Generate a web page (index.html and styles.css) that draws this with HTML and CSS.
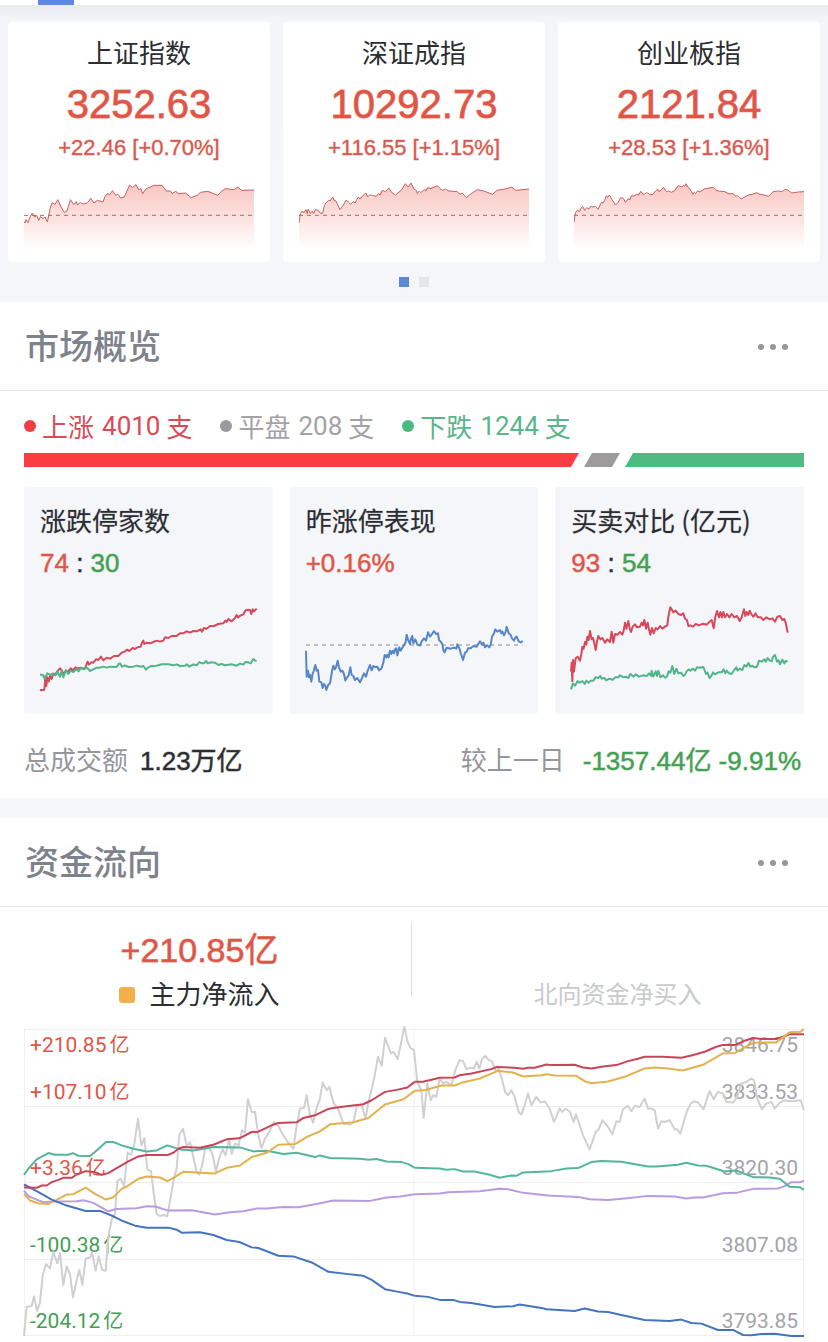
FILE: index.html
```html
<!DOCTYPE html>
<html lang="zh-CN">
<head>
<meta charset="utf-8">
<meta name="viewport" content="width=device-width, initial-scale=1">
<title>市场概览</title>
<link rel="stylesheet" href="styles.css">
</head>
<body>
<div class="tabbar"><span class="tabbar-active"></span></div>

<section class="indices">
  <svg class="defs" aria-hidden="true"><defs>
    <linearGradient id="fade" x1="0" y1="0" x2="0" y2="1">
      <stop offset="0" stop-color="#f8c6c2"/>
      <stop offset="0.5" stop-color="#fce2e0"/>
      <stop offset="1" stop-color="#ffffff"/>
    </linearGradient>
  </defs></svg>
  <div class="index-grid">
    <article class="index-card">
      <h3 class="index-name">上证指数</h3>
      <p class="index-value">3252.63</p>
      <p class="index-change">+22.46 [+0.70%]</p>
      <svg class="index-chart" viewBox="72 545 688 204" preserveAspectRatio="none">
        <path fill="url(#fade)" d="M72,749V664L78,658 84,667 90,650 97,638 104,650 110,645 116,660 122,648 128,655 135,650 142,665 150,625 156,607 165,612 173,598 183,620 192,636 200,633 211,598 221,613 228,604 240,612 262,607 272,594 281,608 292,600 308,605 320,580 328,583 337,571 346,585 360,593 372,590 388,554 396,562 407,553 415,568 422,565 427,580 437,565 450,560 460,555 485,555 498,572 510,572 515,580 525,573 535,580 555,578 572,592 590,585 600,576 622,573 652,585 662,573 675,565 700,568 712,560 722,570 760,569V749Z"/>
        <polyline class="index-line" points="72,664 75,668 78,658 84,667 90,650 97,638 104,650 110,645 116,660 122,648 128,655 135,650 142,665 150,625 156,607 165,612 173,598 183,620 192,636 200,633 211,598 221,613 228,604 232,614 240,607 250,611 262,607 272,594 281,608 292,600 308,605 314,590 320,580 328,583 337,571 346,585 354,582 360,593 372,590 388,554 396,562 407,553 415,568 422,565 427,580 437,565 450,560 460,555 485,555 498,572 510,572 515,580 525,573 535,580 555,578 572,592 590,585 600,576 622,573 652,585 662,573 675,565 700,568 712,560 722,570 760,569"/>
        <line class="index-base" x1="72" y1="645" x2="760" y2="645"/>
      </svg>
    </article>
    <article class="index-card">
      <h3 class="index-name">深证成指</h3>
      <p class="index-value">10292.73</p>
      <p class="index-change">+116.55 [+1.15%]</p>
      <svg class="index-chart" viewBox="66 545 696 204" preserveAspectRatio="none">
        <path fill="url(#fade)" d="M66,749V668L70,640 80,632 92,628 100,640 110,632 120,630 138,638 146,610 155,600 168,590 178,602 190,628 208,600 222,612 240,600 248,592 268,578 280,590 300,588 318,570 328,574 338,563 346,576 358,584 375,570 388,550 396,560 405,548 414,566 428,580 445,568 455,562 485,556 500,570 520,572 545,574 560,582 572,592 590,578 605,568 625,572 652,582 665,570 690,566 710,560 722,570 762,566V749Z"/>
        <polyline class="index-line" points="66,668 70,640 76,632 80,638 87,628 91,640 94,626 100,640 106,632 110,640 116,628 124,630 132,640 138,638 141,622 146,610 155,600 160,602 168,590 172,600 178,602 190,628 200,615 208,600 215,604 222,612 230,604 236,608 240,600 245,590 250,596 258,588 268,578 274,590 280,584 300,588 306,580 312,584 318,570 328,574 338,563 346,576 358,584 375,570 388,550 396,560 405,548 414,566 421,570 424,580 430,572 434,577 445,568 450,572 455,562 465,565 485,556 492,564 500,570 510,567 520,572 545,574 553,582 560,578 572,592 590,578 605,568 625,572 652,582 665,570 690,566 710,560 722,570 762,566"/>
        <line class="index-base" x1="66" y1="645" x2="762" y2="645"/>
      </svg>
    </article>
    <article class="index-card">
      <h3 class="index-name">创业板指</h3>
      <p class="index-value">2121.84</p>
      <p class="index-change">+28.53 [+1.36%]</p>
      <svg class="index-chart" viewBox="68 545 689 204" preserveAspectRatio="none">
        <path fill="url(#fade)" d="M68,749V666L72,638 82,630 94,618 100,630 112,622 125,620 140,627 150,606 160,600 170,585 182,598 192,614 208,592 222,606 240,586 255,582 268,573 280,583 305,582 318,567 328,570 336,561 345,574 360,576 380,556 392,560 404,550 414,564 426,580 445,575 460,565 485,561 500,572 520,574 545,580 568,596 590,584 615,577 650,588 665,574 690,574 707,568 720,578 740,575 757,574V749Z"/>
        <polyline class="index-line" points="68,666 72,638 78,630 84,634 90,622 94,618 100,630 106,622 112,626 118,618 125,620 132,618 140,627 150,606 155,608 160,600 165,586 168,592 174,584 182,598 192,614 200,606 208,592 216,594 222,606 230,596 236,598 240,586 246,588 255,582 262,584 268,573 276,583 286,577 296,583 305,582 312,572 318,567 322,574 328,570 336,561 345,574 352,572 360,576 370,570 380,556 392,560 396,555 400,558 404,550 408,560 414,564 420,574 424,582 428,576 432,580 438,572 445,575 460,565 485,561 492,568 500,572 520,574 530,580 545,580 552,588 558,586 568,596 580,590 590,584 602,582 615,577 625,582 638,584 650,588 665,574 680,572 690,574 700,568 707,568 720,578 740,575 757,574"/>
        <line class="index-base" x1="68" y1="645" x2="757" y2="645"/>
      </svg>
    </article>
  </div>
  <div class="pager">
    <button class="pager-dot pager-dot-on" type="button" aria-label="第一页"></button>
    <button class="pager-dot" type="button" aria-label="第二页"></button>
  </div>
</section>

<section class="panel">
  <header class="panel-head">
    <h2 class="panel-title">市场概览</h2>
    <button class="more" type="button" aria-label="更多"><svg width="30" height="6" viewBox="0 0 30 6"><circle cx="3" cy="3" r="3"/><circle cx="15" cy="3" r="3"/><circle cx="27" cy="3" r="3"/></svg></button>
  </header>
  <div class="overview">
    <ul class="breadth">
      <li class="breadth-item up"><i class="breadth-dot"></i>上涨<span class="breadth-num">4010</span>支</li>
      <li class="breadth-item flat"><i class="breadth-dot"></i>平盘<span class="breadth-num">208</span>支</li>
      <li class="breadth-item down"><i class="breadth-dot"></i>下跌<span class="breadth-num">1244</span>支</li>
    </ul>
    <div class="ratio"><span class="ratio-up"></span><span class="ratio-flat"></span><span class="ratio-down"></span></div>
    <div class="stat-grid">
      <article class="stat">
        <h3 class="stat-name">涨跌停家数</h3>
        <p class="stat-value"><span class="rise">74</span> : <span class="fall">30</span></p>
        <svg class="stat-chart" viewBox="90 375 650 264" preserveAspectRatio="none">
          <polyline class="c-red" points="90,630 102,630 104,622 106,588 109,618 112,592 116,605 120,588 125,597 129,582 135,584 142,574 150,565 156,572 160,584 166,574 175,574 182,565 190,571 196,562 205,565 212,564 225,566 230,552 233,545 237,554 244,547 250,548 258,538 265,540 273,530 280,541 290,533 300,536 312,528 325,528 335,518 345,514 352,509 358,513 368,504 375,507 384,501 392,500 397,486 400,482 403,492 410,488 420,490 430,486 440,482 450,485 460,482 465,472 475,474 485,468 500,468 510,460 520,460 530,454 540,458 550,453 560,454 572,448 576,455 582,444 590,446 600,438 612,438 625,432 640,430 646,422 650,426 655,417 665,424 675,414 680,405 684,412 692,406 700,403 706,392 712,389 720,390 724,402 728,388 732,394 740,386"/>
          <polyline class="c-green" points="90,584 98,584 104,597 112,580 120,584 130,580 137,586 142,575 150,590 155,572 160,592 168,570 175,582 182,572 190,576 200,567 206,574 212,563 220,568 230,562 240,573 250,568 260,563 270,563 280,560 290,563 300,560 320,561 326,552 330,550 336,560 345,556 355,561 370,560 380,557 395,560 400,558 408,569 415,562 425,558 440,557 455,553 475,553 490,556 500,553 510,558 525,557 530,553 538,560 550,553 560,556 568,546 575,550 582,550 588,543 593,550 602,547 615,548 625,555 635,552 645,556 665,553 680,557 690,551 700,554 706,546 715,547 722,550 730,537 735,542 740,542"/>
        </svg>
      </article>
      <article class="stat">
        <h3 class="stat-name">昨涨停表现</h3>
        <p class="stat-value"><span class="rise">+0.16%</span></p>
        <svg class="stat-chart" viewBox="76 375 650 264" preserveAspectRatio="none">
          <line class="c-base" x1="76" y1="495" x2="726" y2="495"/>
          <polyline class="c-blue" points="76,512 78,590 82,572 85,592 88,584 92,605 96,580 99,574 104,555 108,572 112,570 116,605 122,607 126,624 130,612 134,618 137,630 143,614 148,610 154,574 158,557 162,568 166,562 171,542 175,562 180,575 185,572 190,582 194,602 198,594 204,586 209,562 213,585 218,588 223,600 230,594 238,607 244,594 250,580 256,590 260,575 268,555 273,571 278,558 285,562 290,560 295,571 302,566 308,548 312,525 317,532 320,524 324,532 328,512 332,522 336,512 340,520 343,508 347,505 350,526 356,502 360,512 368,498 372,492 375,486 378,464 383,482 388,492 391,476 395,468 398,490 404,478 410,494 418,497 423,484 430,475 436,482 442,457 448,470 452,465 460,453 466,462 472,460 475,480 480,485 485,492 488,510 492,517 498,503 510,506 520,503 527,506 530,493 536,505 541,522 547,540 553,518 558,516 562,505 570,505 578,498 588,500 594,490 598,484 604,494 608,488 613,502 620,496 626,502 630,494 634,470 640,460 644,448 650,455 658,450 662,460 665,455 670,466 675,455 678,440 684,460 690,465 694,475 700,482 704,473 708,470 714,484 720,487 726,483"/>
        </svg>
      </article>
      <article class="stat">
        <h3 class="stat-name">买卖对比 (亿元)</h3>
        <p class="stat-value"><span class="rise">93</span> : <span class="fall">54</span></p>
        <svg class="stat-chart" viewBox="78 375 650 264" preserveAspectRatio="none">
          <polyline class="c-red" points="78,575 80,548 82,604 84,540 87,575 92,535 98,530 105,542 109,522 112,500 116,506 120,486 124,494 127,470 131,480 135,453 140,478 144,474 148,490 152,510 156,484 160,468 166,478 172,474 180,488 187,478 195,486 200,455 205,488 210,462 218,464 225,456 232,464 236,452 240,428 244,446 250,423 254,446 258,456 263,440 270,433 276,442 285,440 290,428 294,436 298,420 303,446 308,428 312,448 316,464 321,444 326,460 332,444 338,448 345,438 352,446 360,440 367,436 370,410 376,382 380,388 385,397 392,392 400,402 408,405 415,400 420,416 426,420 430,438 436,436 444,440 452,432 462,436 474,431 485,434 493,426 500,420 506,445 511,410 516,393 522,412 526,396 531,412 535,396 540,412 546,402 553,412 560,402 568,412 576,408 584,423 590,412 597,388 601,408 605,396 610,405 614,392 620,404 625,410 632,400 638,412 648,412 655,420 664,412 674,418 682,415 690,425 697,410 705,408 712,420 718,417 722,428 728,458"/>
          <polyline class="c-green" points="78,628 84,610 90,617 98,603 104,608 112,603 119,612 124,602 130,608 138,602 145,602 152,592 160,594 166,588 170,596 178,594 184,601 192,596 204,599 210,592 220,592 225,586 236,592 243,590 250,594 256,582 266,590 272,583 282,590 294,586 306,588 312,580 318,588 320,572 325,590 332,574 336,588 340,572 346,592 354,586 360,593 366,590 371,574 376,578 382,558 388,582 394,566 400,580 408,578 415,588 420,584 425,574 431,568 436,572 444,566 450,572 456,562 465,563 475,561 483,582 487,577 494,594 500,586 504,577 510,583 520,577 530,577 536,568 541,580 545,572 552,580 560,582 566,572 574,562 578,572 584,566 592,570 598,555 604,560 610,549 616,560 622,557 628,562 636,560 642,542 650,545 658,538 662,545 668,534 674,542 680,544 684,530 690,525 696,545 701,541 705,553 712,539 718,550 722,543 728,545"/>
        </svg>
      </article>
    </div>
    <div class="turnover">
      <p class="turnover-item"><span class="turnover-label">总成交额</span><strong class="turnover-value">1.23万亿</strong></p>
      <p class="turnover-item turnover-diff"><span class="turnover-label">较上一日</span><strong class="turnover-value fall">-1357.44亿 -9.91%</strong></p>
    </div>
  </div>
</section>

<section class="panel">
  <header class="panel-head">
    <h2 class="panel-title">资金流向</h2>
    <button class="more" type="button" aria-label="更多"><svg width="30" height="6" viewBox="0 0 30 6"><circle cx="3" cy="3" r="3"/><circle cx="15" cy="3" r="3"/><circle cx="27" cy="3" r="3"/></svg></button>
  </header>
  <div class="flows">
    <div class="flow flow-main">
      <p class="flow-value">+210.85亿</p>
      <p class="flow-name"><i class="flow-mark"></i>主力净流入</p>
    </div>
    <span class="flow-divider"></span>
    <div class="flow flow-north"><p class="flow-name">北向资金净买入</p></div>
  </div>
  <div class="chart">
    <div class="bands">
      <div class="band">
        <div class="ticks ticks-top"><span class="rise">+210.85<span class="unit">亿</span></span><span class="points">3846.75</span></div>
        <div class="ticks"><span class="rise">+107.10<span class="unit">亿</span></span><span class="points">3833.53</span></div>
      </div>
      <div class="band"><div class="ticks"><span class="rise">+3.36<span class="unit">亿</span></span><span class="points">3820.30</span></div></div>
      <div class="band"><div class="ticks"><span class="fall">-100.38<span class="unit">亿</span></span><span class="points">3807.08</span></div></div>
      <div class="band"><div class="ticks"><span class="fall">-204.12<span class="unit">亿</span></span><span class="points">3793.85</span></div></div>
    </div>
    <svg class="curves" viewBox="72 42 2340 918" preserveAspectRatio="none">
      <line class="mid" x1="1242" y1="42" x2="1242" y2="960"/>
      <g>
        <polyline class="k-gray" points="72,960 80,873 95,870 102,842 111,885 120,860 128,780 138,745 150,758 160,708 172,742 180,712 190,808 200,752 210,775 219,845 228,802 238,762 247,808 257,728 270,725 276,710 287,765 296,722 306,762 317,765 325,665 335,612 345,595 352,497 362,490 372,512 383,412 393,418 403,385 414,310 424,390 433,368 442,462 453,468 462,540 470,595 480,602 490,598 502,602 512,545 520,498 530,458 538,358 549,340 560,392 570,380 580,425 590,470 598,477 606,452 615,402 625,392 637,415 648,468 657,430 668,402 677,420 687,370 695,415 705,385 716,390 726,345 735,352 744,252 755,290 765,290 775,360 784,398 795,370 805,355 822,320 835,332 850,360 865,382 880,400 890,330 900,280 912,278 920,240 930,300 939,322 950,278 960,250 968,202 980,225 988,215 1000,262 1015,282 1030,325 1050,328 1060,320 1070,275 1085,270 1097,310 1105,262 1118,210 1125,175 1134,125 1145,152 1155,68 1173,115 1180,110 1193,132 1203,85 1213,35 1222,78 1232,100 1242,105 1252,200"/>
        <polyline class="k-purple" points="72,525 85,542 110,552 130,560 160,558 230,557 250,554 280,562 325,587 350,580 410,578 440,572 465,573 505,585 575,584 645,597 690,590 730,587 770,579 800,579 850,574 895,575 950,565 1000,555 1110,556 1160,546 1200,543 1244,536"/>
        <polyline class="k-teal" points="72,478 85,460 110,432 145,413 165,418 205,418 218,413 235,421 270,422 290,405 318,380 340,380 365,390 400,400 440,408 470,405 502,390 540,402 580,405 640,395 720,396 760,408 800,406 850,416 890,412 945,425 960,420 990,428 1080,430 1105,433 1130,431 1160,438 1205,440 1225,446 1244,457"/>
        <polyline class="k-yellow" points="72,535 90,555 115,563 145,565 165,555 200,537 220,536 257,516 285,535 318,552 340,545 365,520 380,513 415,490 440,483 480,486 502,497 520,487 550,469 645,474 680,457 720,450 755,425 800,412 835,388 885,386 920,365 960,348 990,327 1060,321 1105,308 1155,268 1210,252 1244,227"/>
        <polyline class="k-blue" points="72,507 110,527 155,552 200,570 257,586 300,586 340,602 370,617 405,630 440,636 505,636 530,642 545,651 600,650 640,658 680,673 718,679 755,695 775,697 835,720 880,722 935,740 985,768 1045,775 1090,780 1115,792 1155,820 1195,828 1222,833 1244,840"/>
        <polyline class="k-red" points="72,516 110,517 125,510 140,510 155,500 175,493 190,487 215,487 230,477 257,467 285,470 305,478 325,473 350,458 385,438 415,423 440,419 502,419 520,412 535,400 550,395 600,397 640,388 680,372 718,369 755,350 775,349 815,330 835,323 890,321 910,308 945,300 985,281 1000,278 1040,273 1090,267 1115,255 1155,230 1190,224 1222,217 1244,200"/>
      </g>
      <g transform="translate(1224)">
        <polyline class="k-gray" points="28,200 40,225 47,308 58,205 68,255 75,240 85,245 95,190 105,205 115,200 130,210 142,165 155,135 165,138 175,162 188,158 198,160 206,140 214,160 222,132 232,122 242,135 252,138 262,165 272,162 280,185 292,232 300,240 310,225 320,245 332,290 340,298 350,270 360,235 370,270 385,245 398,262 410,258 425,280 438,320 455,280 463,290 472,280 485,288 497,320 504,297 525,360 545,402 563,350 572,342 583,315 597,330 613,357 625,318 635,320 645,282 660,272 670,288 680,272 695,275 710,250 720,280 730,280 740,285 750,340 760,318 770,320 785,315 800,342 808,342 817,355 830,310 838,285 848,265 858,258 870,262 887,282 897,250 905,228 917,252 930,230 945,235 955,260 975,262 985,250 1000,205 1015,200 1030,190 1038,195 1048,250 1062,282 1075,265 1090,260 1100,280 1115,262 1130,255 1150,258 1178,255 1188,285"/>
        <polyline class="k-purple" points="20,536 95,534 120,530 215,527 275,520 300,521 345,532 420,540 510,544 545,551 600,553 665,547 720,541 800,543 835,549 865,545 885,546 945,533 985,532 1035,520 1110,519 1130,512 1150,500 1178,500 1188,495"/>
        <polyline class="k-teal" points="20,457 95,459 115,463 140,461 165,468 200,468 245,478 275,487 310,480 325,481 345,471 430,467 475,459 510,458 550,440 580,437 640,439 720,453 745,453 810,448 835,442 870,450 895,451 950,468 985,465 1005,473 1035,485 1085,486 1115,490 1145,514 1175,515 1188,523"/>
        <polyline class="k-blue" points="20,840 60,843 95,852 135,852 155,858 190,861 260,873 315,871 335,866 400,876 415,880 500,885 530,878 570,887 600,888 640,897 710,912 785,915 820,911 850,921 880,923 930,942 975,942 1005,957 1030,958 1060,954 1100,953 1150,960 1188,960"/>
        <polyline class="k-red" points="20,200 45,200 95,188 140,187 155,180 190,175 250,162 265,156 320,158 345,161 360,158 380,158 415,148 430,150 500,149 525,157 550,160 585,154 625,150 660,138 690,131 710,125 765,125 820,128 850,121 890,110 925,95 945,90 980,90 1010,77 1035,69 1060,72 1105,72 1145,58 1188,58"/>
        <polyline class="k-yellow" points="20,227 50,225 100,211 140,211 160,203 215,190 270,167 315,172 345,184 400,180 415,177 440,181 505,182 530,198 550,204 600,199 650,185 710,160 740,157 780,160 825,166 885,149 945,115 980,114 1030,86 1050,82 1105,82 1145,52 1178,50 1188,42"/>
      </g>
    </svg>
  </div>
</section>
</body>
</html>
```

FILE: styles.css
```css
* { box-sizing: border-box; }

body {
  margin: 0;
  background: #f4f6fa;
  color: #2b2d31;
  font-family: "Liberation Sans", "Noto Sans CJK SC", sans-serif;
}

h2, h3, p, ul { margin: 0; padding: 0; font-weight: 400; }
button { padding: 0; border: 0; background: none; cursor: pointer; }
svg { display: block; }

.rise { color: #df5647; -webkit-text-stroke-color: #df564780; }
.fall { color: #43a052; -webkit-text-stroke-color: #43a05280; }

.tabbar { height: 5px; padding-left: 38px; background: #fff; }
.tabbar-active { display: block; width: 36px; height: 5px; background: #5d87e2; }

/* Index cards */
.indices {
  padding: 17px 8px 15px;
  background: linear-gradient(#e8ebf0, #f3f5f9 16px, #f4f6fa);
}
.defs { position: absolute; width: 0; height: 0; }
.index-grid { display: grid; grid-template-columns: repeat(3, 1fr); gap: 13px; }
.index-card {
  padding: 12px 16px;
  border-radius: 4px;
  background: #fff;
  text-align: center;
}
.index-name { font-size: 26px; line-height: 40px; }
.index-value {
  color: #df5647;
  font-size: 40px;
  line-height: 60px;
  -webkit-text-stroke: 1px #df5647c0;
}
.index-change {
  color: #d9584d;
  font-size: 22px;
  line-height: 28px;
  white-space: nowrap;
  -webkit-text-stroke: 1px #d9584d66;
}
.index-chart { width: 100%; height: 68px; margin-top: 20px; }
.index-line { fill: none; stroke: #c4605f; stroke-width: 1px; vector-effect: non-scaling-stroke; }
.index-base { stroke: #96706f; stroke-width: 1px; stroke-dasharray: 4 4; vector-effect: non-scaling-stroke; }

.pager { display: flex; justify-content: center; gap: 10px; margin-top: 15px; }
.pager-dot { width: 10px; height: 10px; background: #e4e6eb; }
.pager-dot-on { background: #5b89d8; }

/* Panels */
.panel { margin-bottom: 20px; background: #fff; }
.panel:last-child { margin-bottom: 0; }
.panel-head {
  display: flex;
  align-items: center;
  justify-content: space-between;
  height: 89px;
  padding: 2px 40px 0 25px;
  border-bottom: 1px solid #e4e5e7;
}
.panel-title { color: #7e828b; font-size: 34px; font-weight: 500; line-height: 48px; }
.more { fill: #96979b; }

/* Market overview */
.overview { padding: 15px 24px 17px; }
.breadth { display: flex; gap: 28px; list-style: none; font-size: 26px; line-height: 40px; }
.breadth-item {
  display: flex;
  align-items: center;
  font-family: "Noto Sans CJK SC", sans-serif;
}
.breadth-dot { width: 12px; height: 12px; margin-right: 6px; border-radius: 50%; }
.breadth-num { margin: 0 6px 0 8px; font-family: Roboto, sans-serif; }
.up { color: #d94b57; }
.up .breadth-dot { background: #f23d40; }
.flat { color: #a3a3a5; }
.flat .breadth-dot { background: #9b9b9d; }
.down { color: #5bb58b; }
.down .breadth-dot { background: #4bba80; }

.ratio { display: flex; gap: 5px; height: 14px; margin-top: 7px; }
.ratio-up { flex: 555; background: #fb3c42; clip-path: polygon(0 0, 100% 0, calc(100% - 8px) 100%, 0 100%); }
.ratio-flat { flex: 36; background: #9e9b9d; clip-path: polygon(8px 0, 100% 0, calc(100% - 8px) 100%, 0 100%); }
.ratio-down { flex: 179; background: #4ebc80; clip-path: polygon(8px 0, 100% 0, 100% 100%, 0 100%); }

.stat-grid { display: grid; grid-template-columns: repeat(3, 1fr); gap: 17px; margin-top: 20px; }
.stat { padding: 12px 16px 21px; border-radius: 3px; background: #f4f6fa; }
.stat-name {
  font-family: "Noto Sans CJK SC", sans-serif;
  font-size: 26px;
  line-height: 42px;
  white-space: nowrap;
  -webkit-text-stroke: 1px #2b2d3133;
}
.stat-value { font-size: 26px; line-height: 44px; -webkit-text-stroke: 1px #2b2d3180; }
.stat-chart { width: 100%; height: 88px; margin-top: 20px; overflow: visible; }
.stat-chart polyline { fill: none; stroke-width: 2px; stroke-linejoin: round; vector-effect: non-scaling-stroke; }
.c-red { stroke: #d7485a; }
.c-green { stroke: #52b58a; }
.c-blue { stroke: #5686ca; }
.c-base { stroke: #85888d; stroke-width: 1px; stroke-dasharray: 4 4; vector-effect: non-scaling-stroke; }

.turnover { display: flex; justify-content: space-between; margin-top: 27px; }
.turnover-item { display: flex; align-items: center; gap: 12px; font-size: 26px; line-height: 40px; }
.turnover-diff { gap: 18px; padding-right: 3px; }
.turnover-label { color: #94969a; }
.turnover-value { font-weight: 400; -webkit-text-stroke-width: 1px; }
.turnover-value:not(.fall) { -webkit-text-stroke-color: #2b2d3180; }

/* Capital flow */
.flows { display: grid; grid-template-columns: 1fr 1px 1fr; padding-right: 5px; }
.flow { display: flex; flex-direction: column; align-items: center; justify-content: flex-end; height: 106px; }
.flow-main { padding-right: 12px; }
.flow-divider { height: 75px; margin-top: 15px; background: #e0e1e4; }
.flow-value { color: #df5647; font-size: 34px; line-height: 54px; -webkit-text-stroke: 1px #df5647a0; }
.flow-name { display: flex; align-items: center; gap: 14px; font-size: 26px; line-height: 36px; }
.flow-mark { width: 16px; height: 16px; border-radius: 3px; background: #f2b04a; }
.flow-north .flow-name { color: #c8cacd; font-size: 24px; }

.chart { position: relative; height: 307px; margin: 16px 24px 0; }
.panel:last-child { padding-bottom: 6px; }
.bands { display: flex; flex-direction: column; height: 100%; border: 1px solid #eff0f1; }
.band {
  display: flex;
  flex: 1;
  flex-direction: column;
  justify-content: flex-end;
  border-bottom: 1px solid #eceeef;
}
.band:first-child { justify-content: space-between; }
.band:last-child { border-bottom: 0; }
.ticks {
  display: flex;
  justify-content: space-between;
  padding: 0 5px 2px;
  font-family: Roboto, "Noto Sans CJK SC", sans-serif;
  font-size: 21px;
  line-height: 24px;
  -webkit-text-stroke-width: 0;
}
.ticks-top { padding-top: 3px; }
.points { color: #a3a4a7; }
.unit { margin-left: 3px; font-size: 20px; }
.curves { position: absolute; inset: 0; width: 100%; height: 100%; overflow: visible; }
.curves polyline { fill: none; stroke-width: 2px; stroke-linejoin: round; vector-effect: non-scaling-stroke; }
.mid { stroke: #eff0f1; stroke-width: 1px; vector-effect: non-scaling-stroke; }
.curves .k-gray { stroke: #d0d0d2; }
.curves .k-purple { stroke: #b99be0; }
.curves .k-teal { stroke: #53b69c; }
.curves .k-yellow { stroke: #e2b24c; }
.curves .k-blue { stroke: #4574be; }
.curves .k-red { stroke: #ca4459; }
```
